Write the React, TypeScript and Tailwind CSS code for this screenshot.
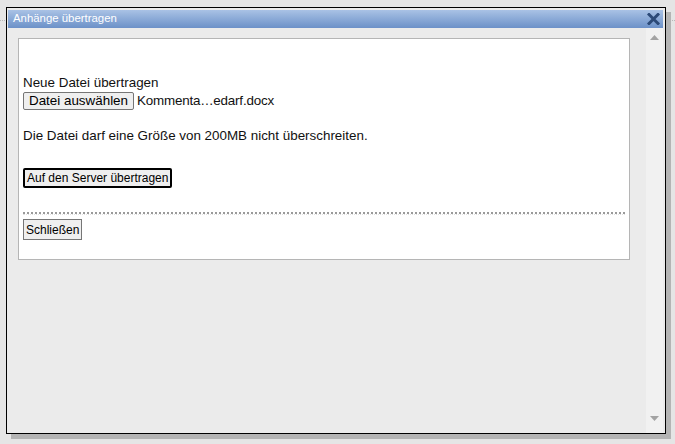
import React from 'react';

const font = { fontFamily: '"Liberation Sans", Arial, sans-serif' };

function ScrollArrow({ up }: { up?: boolean }) {
  return (
    <svg width="9" height="5" viewBox="0 0 9 5" className="block">
      {up ? <polygon points="0,5 9,5 4.5,0" fill="#a3a3a3" /> : <polygon points="0,0 9,0 4.5,5" fill="#a3a3a3" />}
    </svg>
  );
}

const App: React.FC = () => {
  return (
    <div className="relative w-[675px] h-[444px] bg-[#e5e5e5] overflow-hidden" style={font}>
      {/* dialog behind */}
      <div className="absolute left-0 right-0 top-[20px] border-t border-dotted border-[#b8b8b8]" />

      <div className="absolute left-[6px] top-[7px] w-[660px] h-[427px] border border-black bg-[#ebebeb] shadow-[5px_5px_0_#b4b4b4] flex flex-col pt-[2px] pl-[1px] pr-[2px]">
        <div className="h-[18px] flex items-center justify-between pl-[5px] pr-[3px] bg-gradient-to-b from-[#a9c2e5] to-[#6c91c8]">
          <span className="text-[11.4px] text-white leading-none">Anhänge übertragen</span>
          <svg width="13" height="12" viewBox="0 0 13 12">
            <path d="M2 1.5 L11 10.5 M11 1.5 L2 10.5" stroke="#2c4a78" strokeWidth="3" strokeLinecap="square" />
          </svg>
        </div>

        <div className="flex flex-1 min-h-0">
          <div className="flex-1 pl-[10px] pt-[10px]">
            <div className="w-[612px] h-[222px] bg-white border border-[#b5b5b5] px-[4px] text-[13.4px] text-[#111]">
              <div className="h-[36px]" />
              <div className="leading-[16px]">Neue Datei übertragen</div>
              <div className="flex items-center h-[18px] mt-[1px]">
                <button className="h-[18px] px-[5px] text-[13.4px] leading-none bg-[#efefef] border border-[#767676] rounded-[2px] text-black">Datei auswählen</button>
                <span className="ml-[3px] leading-none tracking-[-0.2px]">Kommenta…edarf.docx</span>
              </div>
              <div className="mt-[18px] leading-[16px]">Die Datei darf eine Größe von 200MB nicht überschreiten.</div>
              <div className="mt-[24px]">
                <button className="h-[20px] px-[2px] text-[12px] leading-none bg-[#efefef] border-2 border-black rounded-[2px] text-black">Auf den Server übertragen</button>
              </div>
              <div className="mt-[24px] h-[3px] border-t-2 border-dotted border-[#9a9a9a] border-b border-b-[#e2e2e2]" />
              <div className="mt-[4px]">
                <button className="h-[21px] px-[2px] text-[12px] leading-none bg-[#efefef] border border-[#767676] text-black">Schließen</button>
              </div>
            </div>
          </div>
          <div className="w-[17px] bg-[#f1f1f1] flex flex-col items-center justify-between pt-[7px] pb-[12px]">
            <ScrollArrow up />
            <ScrollArrow />
          </div>
        </div>
      </div>
    </div>
  );
};

export default App;
